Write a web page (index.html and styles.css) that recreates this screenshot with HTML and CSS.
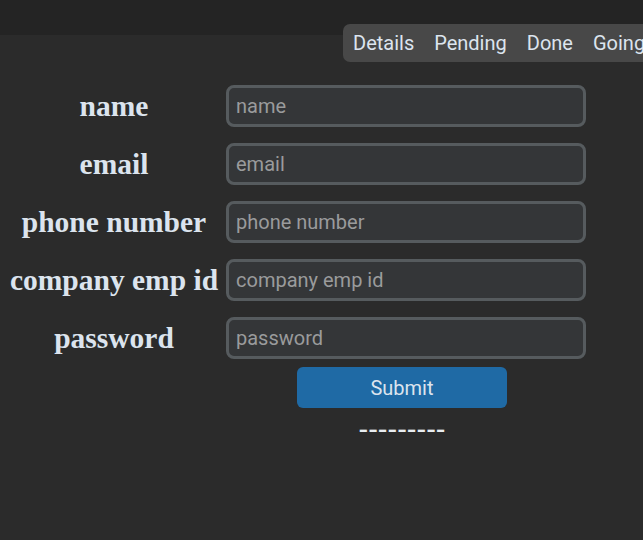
FILE: index.html
```html
<!DOCTYPE html>
<html lang="en">

<head>
    <meta charset="UTF-8">
    <meta name="viewport" content="width=device-width, initial-scale=1.0">
    <title>Register</title>
    <link rel="stylesheet" href="styles.css">
</head>

<body>
    <div class="top-bar"></div>

    <div class="tabs">
        <span class="tab">Details</span>
        <span class="tab">Pending</span>
        <span class="tab">Done</span>
        <span class="tab">Going</span>
    </div>

    <form class="form-grid">
        <label for="name">name</label>
        <input id="name" type="text" placeholder="name">

        <label for="email">email</label>
        <input id="email" type="text" placeholder="email">

        <label for="phone">phone number</label>
        <input id="phone" type="text" placeholder="phone number">

        <label for="empid">company emp id</label>
        <input id="empid" type="text" placeholder="company emp id">

        <label for="password">password</label>
        <input id="password" type="password" placeholder="password">

        <button type="button" class="submit">Submit</button>
        <p class="status">---------</p>
    </form>
</body>

</html>
```

FILE: styles.css
```css
body {
    margin: 0;
    padding: 0;
    background-color: #2b2b2b;
    font-family: Roboto, "Noto Sans", sans-serif;
    overflow: hidden;
    height: 540px;
}

.top-bar {
    height: 35px;
    background-color: #242424;
}

.tabs {
    display: flex;
    margin: -11px 0 0 343px;
    height: 38px;
    align-items: center;
    background-color: #484848;
    border-radius: 7px 0 0 7px;
    white-space: nowrap;
    overflow: hidden;
}

.tab {
    padding: 0 10px;
    color: #dce4ee;
    font-size: 20px;
}

.form-grid {
    display: grid;
    grid-template-columns: 226px 360px;
    grid-auto-rows: 42px;
    row-gap: 16px;
    margin: 23px 0 0 0;
}

.form-grid label {
    text-align: center;
    align-self: center;
    padding-left: 2px;
    font-family: "Liberation Serif", serif;
    font-weight: bold;
    font-size: 29.5px;
    color: #dce4ee;
    white-space: nowrap;
}

.form-grid input {
    box-sizing: border-box;
    width: 360px;
    height: 42px;
    border: 3px solid #565b5e;
    border-radius: 8px;
    background-color: #343638;
    padding: 0 7px;
    font-family: Roboto, sans-serif;
    font-size: 20px;
    color: #dce4ee;
    outline: none;
}

.form-grid input::placeholder {
    color: #9a9b9c;
}

.submit {
    grid-column: 2;
    margin: -8px 0 0 71px;
    width: 210px;
    height: 41px;
    border: none;
    border-radius: 6px;
    background-color: #1f6aa5;
    color: #dce4ee;
    font-family: Roboto, sans-serif;
    font-size: 20px;
}

.status {
    grid-column: 2;
    margin: -20px 0 0 0;
    width: 352px;
    text-align: center;
    color: #e8ecf0;
    font-family: "Liberation Sans", sans-serif;
    font-size: 29px;
}
```
